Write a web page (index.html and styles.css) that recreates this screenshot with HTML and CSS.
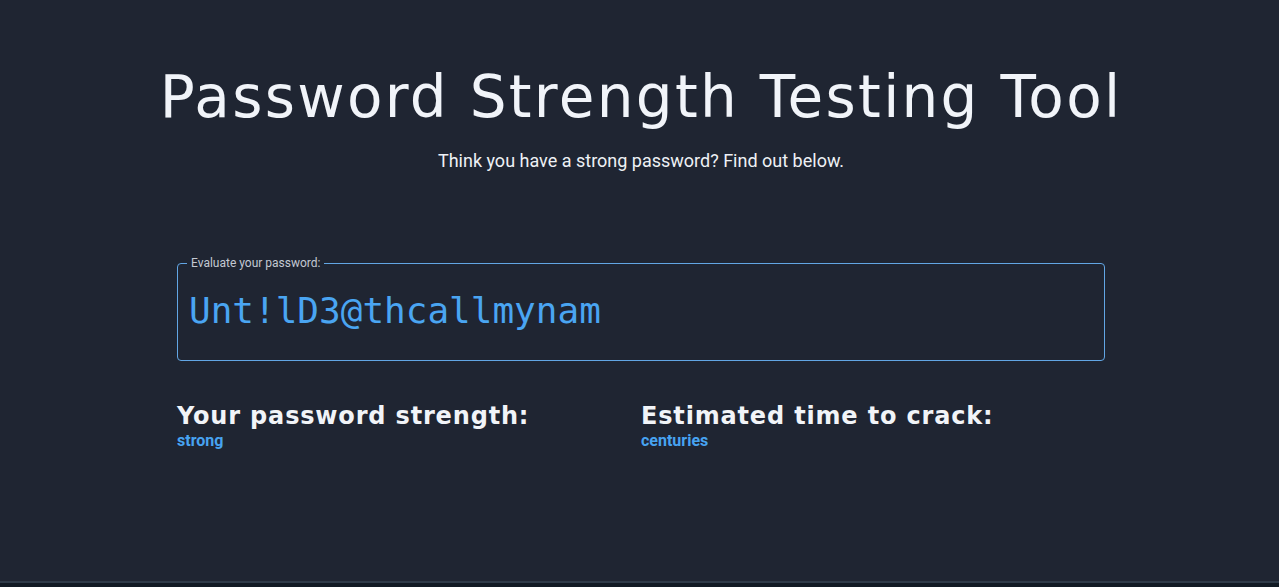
FILE: index.html
```html
<!DOCTYPE html>
<html lang="en">
<head>
<meta charset="utf-8">
<title>Password Strength Testing Tool</title>
<link rel="stylesheet" href="styles.css">
</head>
<body>
<main class="page">
  <div class="container">
    <header class="hero">
      <h1 class="title">Password Strength Testing Tool</h1>
      <p class="subtitle">Think you have a strong password? Find out below.</p>
    </header>
    <fieldset class="field">
      <legend class="field-label">Evaluate your password:</legend>
      <input class="field-input" type="text" value="Unt!lD3@thcallmynam" aria-label="Evaluate your password">
    </fieldset>
    <section class="results">
      <div class="result">
        <h2 class="result-title">Your password strength:</h2>
        <div class="result-value">strong</div>
      </div>
      <div class="result">
        <h2 class="result-title">Estimated time to crack:</h2>
        <div class="result-value">centuries</div>
      </div>
    </section>
  </div>
</main>
<footer class="footer"></footer>
</body>
</html>
```
FILE: styles.css
```css
html, body {
  margin: 0;
  padding: 0;
}
body {
  background: #1f2532;
  color: #f1f4f8;
  font-family: Roboto, "Liberation Sans", sans-serif;
  overflow: hidden;
}
.page {
  height: 581px;
  box-sizing: border-box;
  padding-top: 62px;
  padding-left: 3px;
}
.container {
  width: 928px;
  margin: 0 auto;
}
.hero {
  display: flex;
  flex-direction: column;
  align-items: center;
}
.title {
  margin: 0;
  font-family: "DejaVu Sans", Inter, sans-serif;
  font-weight: 400;
  font-size: 58px;
  letter-spacing: 2.3px;
  line-height: 70px;
  color: #f1f4f9;
  white-space: nowrap;
}
.subtitle {
  margin: 18px 0 0;
  font-size: 18px;
  line-height: normal;
  color: #eef1f5;
}
.field {
  margin: 85px 0 0;
  padding: 0 12px 0 11px;
  border: 1px solid #62a6e4;
  border-radius: 4px;
  min-width: 0;
}
.field-label {
  margin-left: -2px;
  padding: 0 4px;
  font-size: 12px;
  line-height: 14px;
  color: #c3c9d2;
}
.field-input {
  display: block;
  box-sizing: border-box;
  width: 100%;
  height: 42px;
  margin: 19px 0 29px;
  padding: 0;
  border: 0;
  outline: none;
  background: transparent;
  font-family: "DejaVu Sans Mono", monospace;
  font-size: 36px;
  color: #4aa5f2;
}
.results {
  display: grid;
  grid-template-columns: 1fr 1fr;
  margin-top: 40px;
}
.result-title {
  margin: 0;
  font-family: "DejaVu Sans", Inter, sans-serif;
  font-weight: 700;
  font-size: 24px;
  letter-spacing: 0.83px;
  line-height: 30px;
  color: #f1f4f8;
}
.result-value {
  font-size: 16px;
  font-weight: 700;
  line-height: normal;
  color: #47a3f1;
}
.footer {
  height: 4px;
  border-top: 2px solid #2e3a48;
  background: #111a24;
}
```
